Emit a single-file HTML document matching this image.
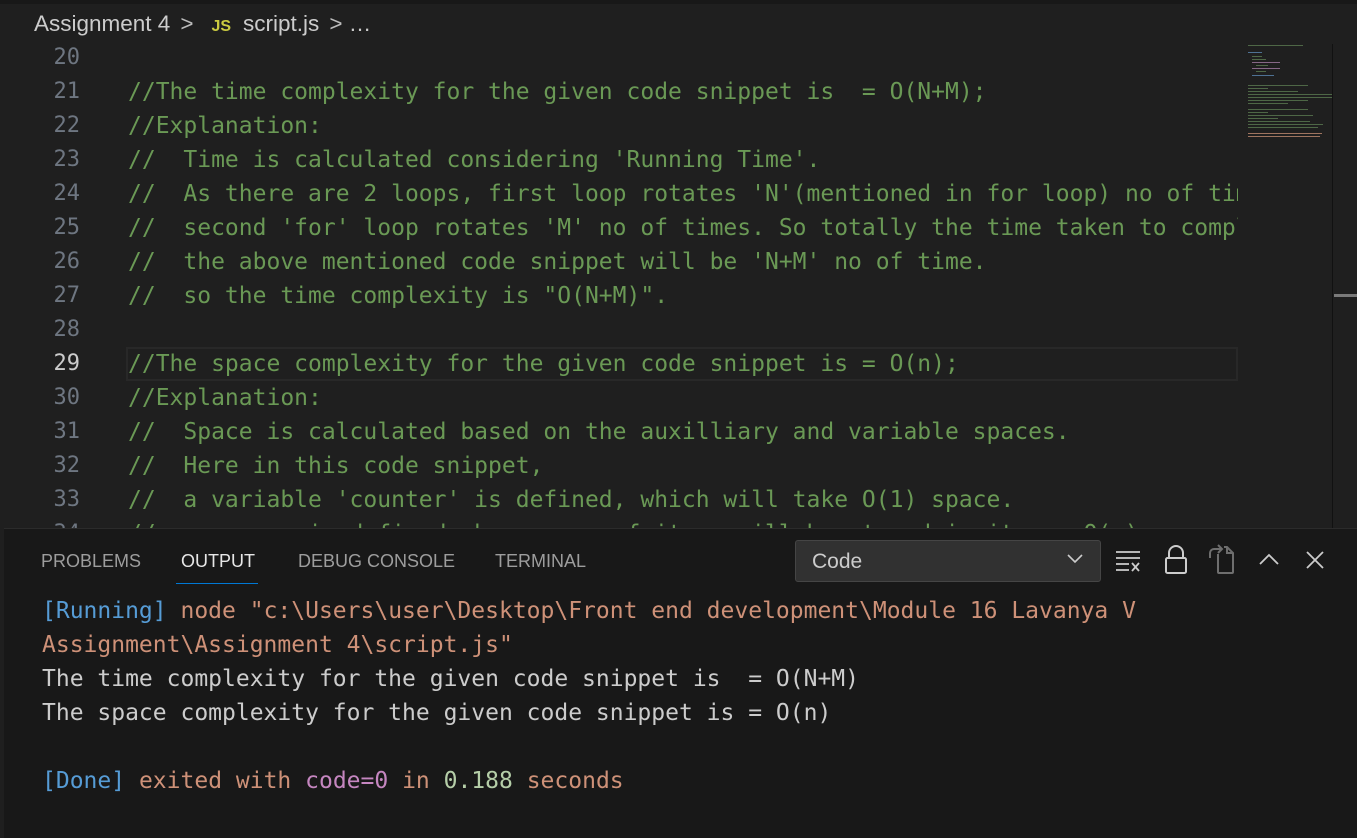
<!DOCTYPE html>
<html><head><meta charset="utf-8"><style>
*{margin:0;padding:0;box-sizing:border-box}
body{width:1357px;height:838px;background:#1f1f1f;overflow:hidden;position:relative;font-family:"DejaVu Sans Mono","Liberation Mono",monospace}
.top{position:absolute;left:0;top:0;width:1357px;height:4px;background:#181818}
.crumb{position:absolute;left:34px;top:11px;font-family:"Liberation Sans",sans-serif;font-size:22.5px;color:#cccccc;white-space:nowrap}
.crumb .js{color:#cbcb41;font-weight:bold;font-size:16px;margin:0 12px 0 18px}
.crumb .ch{color:#bbb;margin-left:10px}
.ed{position:absolute;left:0;top:41px;width:1238px;height:487px;overflow:hidden}
.ln{position:absolute;left:0;width:80px;text-align:right;font-size:22px;color:#6e7681;height:34px;line-height:34px}
.code{position:absolute;left:128px;font-size:23px;color:#6a9955;white-space:pre;height:34px;line-height:34px}
.cur{position:absolute;left:126px;top:306px;width:1112px;height:34px;border:2px solid #282828}
.mini{position:absolute;left:1238px;top:41px;width:94px;height:487px;background:#1f1f1f}
.sb{position:absolute;left:1332px;top:44px;width:25px;height:484px;border-left:1px solid #111;background:#1f1f1f}
.panel{position:absolute;left:4px;top:528px;width:1353px;height:310px;background:#181818;border-top:1px solid #2b2b2b}
.tab{position:absolute;top:22px;font-family:"Liberation Sans",sans-serif;font-size:18px;color:#9d9d9d}
.out{position:absolute;left:38px;font-size:23px;white-space:pre;height:34px;line-height:34px;color:#cccccc}
.o{color:#ce9178}.b{color:#569cd6}.p{color:#c586c0}.g{color:#b5cea8}
.dd{position:absolute;left:791px;top:11px;width:306px;height:42px;background:#313131;border:1px solid #454545;border-radius:3px;font-family:"Liberation Sans",sans-serif;font-size:21px;color:#cccccc;padding:9px 0 0 16px}
svg{position:absolute}
</style></head><body>
<div class="top"></div>
<div class="crumb">Assignment 4<span class="ch">&gt;</span><span class="js">JS</span>script.js<span class="ch">&gt;</span> …</div>
<div class="ed">
<div class="cur"></div>
<div class="ln" style="top:0">20</div>
<div class="ln" style="top:34px">21</div><div class="code" style="top:34px">//The time complexity for the given code snippet is  = O(N+M);</div>
<div class="ln" style="top:68px">22</div><div class="code" style="top:68px">//Explanation:</div>
<div class="ln" style="top:102px">23</div><div class="code" style="top:102px">//  Time is calculated considering 'Running Time'.</div>
<div class="ln" style="top:136px">24</div><div class="code" style="top:136px">//  As there are 2 loops, first loop rotates 'N'(mentioned in for loop) no of times and</div>
<div class="ln" style="top:170px">25</div><div class="code" style="top:170px">//  second 'for' loop rotates 'M' no of times. So totally the time taken to complete</div>
<div class="ln" style="top:204px">26</div><div class="code" style="top:204px">//  the above mentioned code snippet will be 'N+M' no of time.</div>
<div class="ln" style="top:238px">27</div><div class="code" style="top:238px">//  so the time complexity is "O(N+M)".</div>
<div class="ln" style="top:272px">28</div>
<div class="ln" style="top:306px;color:#cccccc">29</div><div class="code" style="top:306px">//The space complexity for the given code snippet is = O(n);</div>
<div class="ln" style="top:340px">30</div><div class="code" style="top:340px">//Explanation:</div>
<div class="ln" style="top:374px">31</div><div class="code" style="top:374px">//  Space is calculated based on the auxilliary and variable spaces.</div>
<div class="ln" style="top:408px">32</div><div class="code" style="top:408px">//  Here in this code snippet,</div>
<div class="ln" style="top:442px">33</div><div class="code" style="top:442px">//  a variable 'counter' is defined, which will take O(1) space.</div>
<div class="ln" style="top:476px">34</div><div class="code" style="top:476px">//  an array is defined where n no of items will be stored in it, so O(n) space.</div>
</div>
<div class="mini">
<svg width="94" height="100" style="left:0;top:0">
<g fill="#5a7a50" opacity="0.8">
<rect x="10" y="4" width="55" height="1"/><rect x="10" y="11" width="14" height="1" fill="#5a86b0"/>
<rect x="14" y="15" width="10" height="1"/><rect x="14" y="18" width="14" height="1"/><rect x="14" y="21" width="28" height="1" fill="#a07aa0"/>
<rect x="18" y="24" width="12" height="1"/><rect x="14" y="27" width="28" height="1" fill="#a07aa0"/><rect x="18" y="30" width="10" height="1"/>
<rect x="14" y="34" width="22" height="1" fill="#5a86b0"/>
<rect x="10" y="44" width="60" height="1"/><rect x="10" y="47" width="20" height="1"/><rect x="10" y="50" width="50" height="1"/>
<rect x="10" y="53" width="84" height="1"/><rect x="10" y="56" width="84" height="1"/><rect x="10" y="59" width="60" height="1"/><rect x="10" y="62" width="40" height="1"/>
<rect x="10" y="68" width="60" height="1"/><rect x="10" y="71" width="20" height="1"/><rect x="10" y="74" width="65" height="1"/><rect x="10" y="77" width="30" height="1"/>
<rect x="10" y="80" width="62" height="1"/><rect x="10" y="83" width="75" height="1"/><rect x="10" y="86" width="70" height="1"/>
<rect x="10" y="92" width="74" height="1" fill="#c08a70"/><rect x="10" y="95" width="72" height="1" fill="#c08a70"/>
</g></svg>
</div>
<div class="sb"><div style="position:absolute;left:1px;top:250px;width:24px;height:3px;background:#7a7a7a"></div></div>
<div class="panel">
<div class="tab" style="left:37px">PROBLEMS</div>
<div class="tab" style="left:177px;color:#e7e7e7">OUTPUT</div>
<div style="position:absolute;left:172px;top:54px;width:82px;height:1px;background:#0078d4"></div>
<div class="tab" style="left:294px">DEBUG CONSOLE</div>
<div class="tab" style="left:491px">TERMINAL</div>
<div class="dd">Code</div>
<svg style="left:1062px;top:23px" width="18" height="14" viewBox="0 0 18 14"><path d="M2 3 L9 10 L16 3" fill="none" stroke="#ccc" stroke-width="1.6"/></svg>
<svg style="left:1110px;top:20px" width="28" height="24" viewBox="0 0 28 24"><path d="M2 3H26M2 9H26M2 15H15M2 21H15" stroke="#ccc" stroke-width="1.8"/><path d="M18 14L25 22M25 14L18 22" stroke="#ccc" stroke-width="1.8"/></svg>
<svg style="left:1159px;top:15px" width="26" height="32" viewBox="0 0 26 32"><path d="M6 14V9a7 7 0 0 1 14 0v5" fill="none" stroke="#ccc" stroke-width="2"/><rect x="3" y="14" width="20" height="15" rx="1.5" fill="none" stroke="#ccc" stroke-width="2"/></svg>
<svg style="left:1204px;top:15px" width="30" height="32" viewBox="0 0 30 32"><path d="M10 10V28a1 1 0 0 0 1 1H24a1 1 0 0 0 1-1V9L19 3H16" fill="none" stroke="#6e6e6e" stroke-width="2"/><path d="M19 3V9H25" fill="none" stroke="#6e6e6e" stroke-width="2"/><path d="M2 14V9a4 4 0 0 1 4-4h7M10 1L14 5L10 9" fill="none" stroke="#6e6e6e" stroke-width="2"/></svg>
<svg style="left:1254px;top:22px" width="22" height="16" viewBox="0 0 22 16"><path d="M2 13L11 4L20 13" fill="none" stroke="#ccc" stroke-width="1.8"/></svg>
<svg style="left:1300px;top:20px" width="22" height="22" viewBox="0 0 22 22"><path d="M3 3L19 19M19 3L3 19" stroke="#ccc" stroke-width="1.8"/></svg>
<div class="out" style="top:65px"><span class="b">[Running]</span> <span class="o">node "c:\Users\user\Desktop\Front end development\Module 16 Lavanya V</span></div>
<div class="out" style="top:99px"><span class="o">Assignment\Assignment 4\script.js"</span></div>
<div class="out" style="top:133px">The time complexity for the given code snippet is  = O(N+M)</div>
<div class="out" style="top:167px">The space complexity for the given code snippet is = O(n)</div>
<div class="out" style="top:235px"><span class="b">[Done]</span> <span class="o">exited with </span><span class="p">code=0</span><span class="o"> in </span><span class="g">0.188</span><span class="o"> seconds</span></div>
</div>
</body></html>
